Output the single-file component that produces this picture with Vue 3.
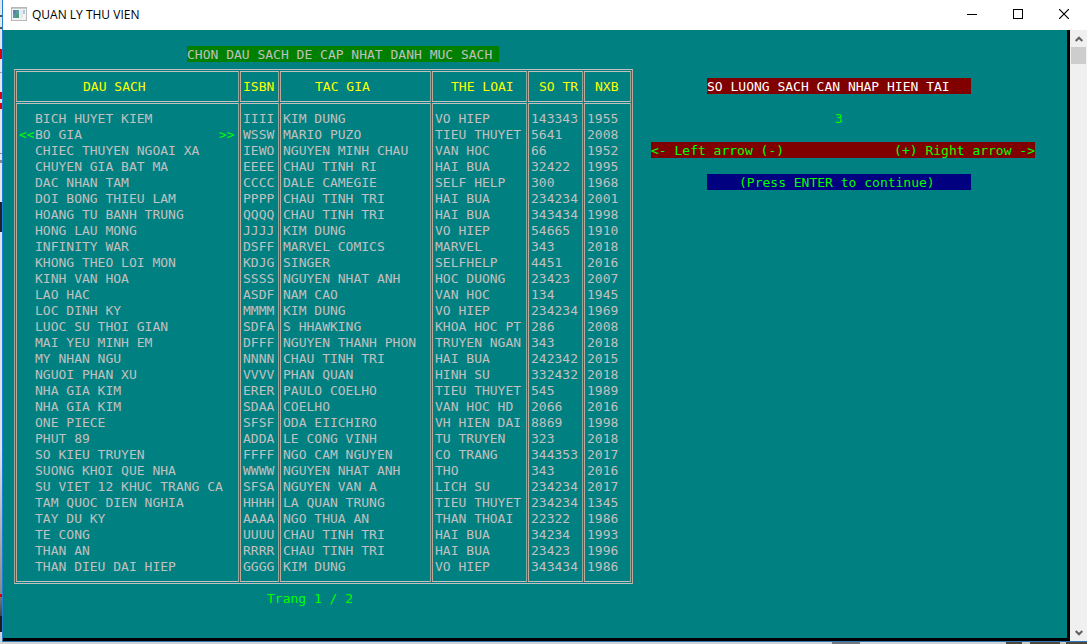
<script setup>
import { ref } from 'vue'

const selected = ref(1)
const quantity = ref(3)

const columns = [
  { label: 'DAU SACH', key: 'title' },
  { label: 'ISBN', key: 'isbn' },
  { label: 'TAC GIA', key: 'author' },
  { label: 'THE LOAI', key: 'genre' },
  { label: 'SO TR', key: 'pages' },
  { label: 'NXB', key: 'year' },
]

const books = [
  ['BICH HUYET KIEM', 'IIII', 'KIM DUNG', 'VO HIEP', '143343', '1955'],
  ['BO GIA', 'WSSW', 'MARIO PUZO', 'TIEU THUYET', '5641', '2008'],
  ['CHIEC THUYEN NGOAI XA', 'IEWO', 'NGUYEN MINH CHAU', 'VAN HOC', '66', '1952'],
  ['CHUYEN GIA BAT MA', 'EEEE', 'CHAU TINH RI', 'HAI BUA', '32422', '1995'],
  ['DAC NHAN TAM', 'CCCC', 'DALE CAMEGIE', 'SELF HELP', '300', '1968'],
  ['DOI BONG THIEU LAM', 'PPPP', 'CHAU TINH TRI', 'HAI BUA', '234234', '2001'],
  ['HOANG TU BANH TRUNG', 'QQQQ', 'CHAU TINH TRI', 'HAI BUA', '343434', '1998'],
  ['HONG LAU MONG', 'JJJJ', 'KIM DUNG', 'VO HIEP', '54665', '1910'],
  ['INFINITY WAR', 'DSFF', 'MARVEL COMICS', 'MARVEL', '343', '2018'],
  ['KHONG THEO LOI MON', 'KDJG', 'SINGER', 'SELFHELP', '4451', '2016'],
  ['KINH VAN HOA', 'SSSS', 'NGUYEN NHAT ANH', 'HOC DUONG', '23423', '2007'],
  ['LAO HAC', 'ASDF', 'NAM CAO', 'VAN HOC', '134', '1945'],
  ['LOC DINH KY', 'MMMM', 'KIM DUNG', 'VO HIEP', '234234', '1969'],
  ['LUOC SU THOI GIAN', 'SDFA', 'S HHAWKING', 'KHOA HOC PT', '286', '2008'],
  ['MAI YEU MINH EM', 'DFFF', 'NGUYEN THANH PHON', 'TRUYEN NGAN', '343', '2018'],
  ['MY NHAN NGU', 'NNNN', 'CHAU TINH TRI', 'HAI BUA', '242342', '2015'],
  ['NGUOI PHAN XU', 'VVVV', 'PHAN QUAN', 'HINH SU', '332432', '2018'],
  ['NHA GIA KIM', 'ERER', 'PAULO COELHO', 'TIEU THUYET', '545', '1989'],
  ['NHA GIA KIM', 'SDAA', 'COELHO', 'VAN HOC HD', '2066', '2016'],
  ['ONE PIECE', 'SFSF', 'ODA EIICHIRO', 'VH HIEN DAI', '8869', '1998'],
  ['PHUT 89', 'ADDA', 'LE CONG VINH', 'TU TRUYEN', '323', '2018'],
  ['SO KIEU TRUYEN', 'FFFF', 'NGO CAM NGUYEN', 'CO TRANG', '344353', '2017'],
  ['SUONG KHOI QUE NHA', 'WWWW', 'NGUYEN NHAT ANH', 'THO', '343', '2016'],
  ['SU VIET 12 KHUC TRANG CA', 'SFSA', 'NGUYEN VAN A', 'LICH SU', '234234', '2017'],
  ['TAM QUOC DIEN NGHIA', 'HHHH', 'LA QUAN TRUNG', 'TIEU THUYET', '234234', '1345'],
  ['TAY DU KY', 'AAAA', 'NGO THUA AN', 'THAN THOAI', '22322', '1986'],
  ['TE CONG', 'UUUU', 'CHAU TINH TRI', 'HAI BUA', '34234', '1993'],
  ['THAN AN', 'RRRR', 'CHAU TINH TRI', 'HAI BUA', '23423', '1996'],
  ['THAN DIEU DAI HIEP', 'GGGG', 'KIM DUNG', 'VO HIEP', '343434', '1986'],
]
</script>

<template>
  <div class="desktop">
    <div class="window">
      <header class="titlebar">
        <svg class="app-icon" width="16" height="14" viewBox="0 0 16 14" aria-hidden="true">
          <rect x="0.5" y="0.5" width="15" height="13" fill="#f4f4f4" stroke="#b4b8bc" />
          <rect x="1" y="1" width="14" height="1" fill="#c8ccd0" />
          <rect x="2" y="3" width="6" height="8" fill="#5b97a4" />
          <rect x="2" y="3" width="3" height="4" fill="#5f83b0" />
          <rect x="5" y="7" width="3" height="4" fill="#4b9b78" />
          <rect x="9" y="3" width="3" height="8" fill="#e4e9ee" />
          <rect x="12" y="3" width="2" height="4" fill="#a9cfd0" />
        </svg>
        <span class="caption">QUAN LY THU VIEN</span>
        <button class="win-btn" type="button" aria-label="Minimize">
          <svg width="10" height="10" viewBox="0 0 10 10"><path d="M0 5.5H10" stroke="#000" /></svg>
        </button>
        <button class="win-btn" type="button" aria-label="Maximize">
          <svg width="10" height="10" viewBox="0 0 10 10"><rect x="0.5" y="0.5" width="9" height="9" fill="none" stroke="#000" /></svg>
        </button>
        <button class="win-btn" type="button" aria-label="Close">
          <svg width="10" height="10" viewBox="0 0 10 10"><path d="M0 0L10 10M10 0L0 10" stroke="#000" stroke-width="1.2" /></svg>
        </button>
      </header>

      <div class="client">
        <main class="console">
          <section class="catalog">
            <h1 class="heading">CHON DAU SACH DE CAP NHAT DANH MUC SACH</h1>
            <table class="books">
              <thead>
                <tr>
                  <th v-for="c in columns" :key="c.key" scope="col" :class="c.key">{{ c.label }}</th>
                </tr>
              </thead>
              <tbody>
                <tr v-for="(b, i) in books" :key="b[1]" @click="selected = i">
                  <td v-for="(v, j) in b" :key="j">
                    <span v-if="j === 0" class="name">
                      <span class="mark">{{ i === selected ? '<<' : '' }}</span>
                      <span class="grow">{{ v }}</span>
                      <span v-if="i === selected" class="mark">&gt;&gt;</span>
                    </span>
                    <template v-else>{{ v }}</template>
                  </td>
                </tr>
              </tbody>
            </table>
            <p class="page">Trang 1 / 2</p>
          </section>

          <aside class="panel">
            <h2 class="bar red">SO LUONG SACH CAN NHAP HIEN TAI</h2>
            <output class="qty">{{ quantity }}</output>
            <p class="hints"><span>&lt;- Left arrow (-)</span><span>(+) Right arrow -&gt;</span></p>
            <p class="bar blue">(Press ENTER to continue)</p>
          </aside>
        </main>

        <div class="scrollbar">
          <button class="sb-btn" type="button" aria-label="Scroll up">
            <svg width="8" height="6" viewBox="0 0 8 6"><path d="M0.7 5L4 1.7L7.3 5" fill="none" stroke="#606060" stroke-width="2" /></svg>
          </button>
          <div class="thumb"></div>
          <button class="sb-btn last" type="button" aria-label="Scroll down">
            <svg width="8" height="6" viewBox="0 0 8 6"><path d="M0.7 1L4 4.3L7.3 1" fill="none" stroke="#606060" stroke-width="2" /></svg>
          </button>
        </div>
      </div>
    </div>
  </div>
</template>

<style>
body {
  background: #d2d2d2;
}
</style>

<style scoped>
.desktop {
  box-sizing: border-box;
  min-height: 100vh;
  display: flex;
  padding: 0 0 2px 2px;
  background:
    linear-gradient(90deg, transparent 832px, #77777a 832px 860px, transparent 860px 1006px, #504840 1006px 1022px, #c8c8c8 1022px 1030px, #504840 1030px 1060px, #c8c8c8 1060px 1066px, #504840 1066px) 0 100% / 100% 2px no-repeat,
    linear-gradient(#e6e6e6 15px, #555 15px 17px, #e6e6e6 17px 27px, #555 27px 29px, #e6e6e6 29px 49px, #e00000 49px 59px, #e6e6e6 59px 72px, #999 72px 73px, #e6e6e6 73px 92px, #e00000 92px 99px, #e6e6e6 99px 103px, #e00000 103px 109px, #e6e6e6 109px 153px, #888 153px 154px, #e6e6e6 154px 160px, #888 160px 163px, #e6e6e6 163px 202px, #20222c 202px 232px, #dce4ee 232px 450px, #888 594px, #e00000 594px 597px, #777 597px, #444 616px, #221a1a 616px 632px, #d2d2d2 632px) 0 0 / 2px 100% no-repeat,
    #d2d2d2;
}

.window {
  flex: 1;
  min-width: 0;
  display: flex;
  flex-direction: column;
  border-left: 1px solid #1c7fd4;
  border-bottom: 1px solid #2a78bc;
}

.titlebar {
  display: flex;
  align-items: center;
  box-sizing: border-box;
  height: 30px;
  padding: 0 0 2px 8px;
  background: #fff;
  color: #000;
  font-family: "Open Sans", "Noto Sans", sans-serif;
  font-size: 12px;
}

.app-icon {
  margin-right: 5px;
}

.caption {
  flex: 1;
}

button {
  display: flex;
  align-items: center;
  justify-content: center;
  margin: 0;
  padding: 0;
  border: 0;
  background: transparent;
}

.win-btn {
  width: 46px;
  height: 28px;
}

.client {
  flex: 1;
  display: flex;
  background: #000;
}

.console {
  flex: 1;
  display: flex;
  align-items: flex-start;
  gap: 18px;
  margin: 0 3px 3px 0;
  padding: 16px 0 0 11px;
  background: #008080;
  color: #c0c0c0;
  font-family: "DejaVu Sans Mono", monospace;
  font-size: 13px;
  line-height: 16px;
  white-space: nowrap;
}

h1,
h2,
p {
  margin: 0;
  font: inherit;
}

.heading,
.bar,
.qty,
.hints {
  padding-top: 1px;
  line-height: 15px;
}

.heading {
  width: 312px;
  margin-left: 173px;
  background: #008000;
}

.books {
  display: block;
  width: fit-content;
  margin-top: 7px;
  padding: 1px;
  border: 1px solid;
  border-color: #c0c0c0 #c0a898 #c0c0c0 #a0a8a0;
}

thead,
tbody {
  display: block;
}

tbody {
  margin-top: 1px;
}

tr {
  display: grid;
  grid-template-columns: 223px 39px 151px 95px 55px 47px;
  column-gap: 1px;
}

th,
td {
  min-width: 0;
  padding: 0 0 0 2px;
  border: 0 solid;
  border-color: #c0c0c0 #90a8a0 #c0c0c0 #c0a898;
  border-width: 0 1px;
  text-align: left;
  font-weight: normal;
}

th {
  padding-top: 7px;
  padding-bottom: 6px;
  border-width: 1px;
  color: #ff0;
}

th.title {
  padding-left: 66px;
}

th.author {
  padding-left: 34px;
}

th.genre {
  padding-left: 18px;
}

th.pages,
th.year {
  padding-left: 10px;
}

tbody tr:first-child td {
  padding-top: 7px;
  border-top-width: 1px;
}

tbody tr:last-child td {
  padding-bottom: 6px;
  border-bottom-width: 1px;
}

.name {
  display: flex;
  padding-right: 3px;
}

.grow {
  flex: 1;
}

.mark {
  width: 16px;
  color: #0f0;
}

.page {
  margin: 7px 0 0 253px;
  color: #0f0;
}

.panel {
  width: 384px;
  margin-top: 32px;
  display: grid;
  row-gap: 16px;
  color: #0f0;
}

.bar {
  margin: 0 64px 0 56px;
}

.red {
  background: #800000;
  color: #fff;
}

.blue {
  padding-left: 32px;
  background: #000080;
}

.qty {
  padding-left: 184px;
}

.hints {
  display: flex;
  justify-content: space-between;
  background: #800000;
}

.scrollbar {
  width: 17px;
  display: flex;
  flex-direction: column;
  background: #f0f0f0;
}

.sb-btn {
  height: 17px;
}

.last {
  margin-top: auto;
}

.thumb {
  height: 17px;
  margin: 0 1px;
  background: #cdcdcd;
}
</style>
